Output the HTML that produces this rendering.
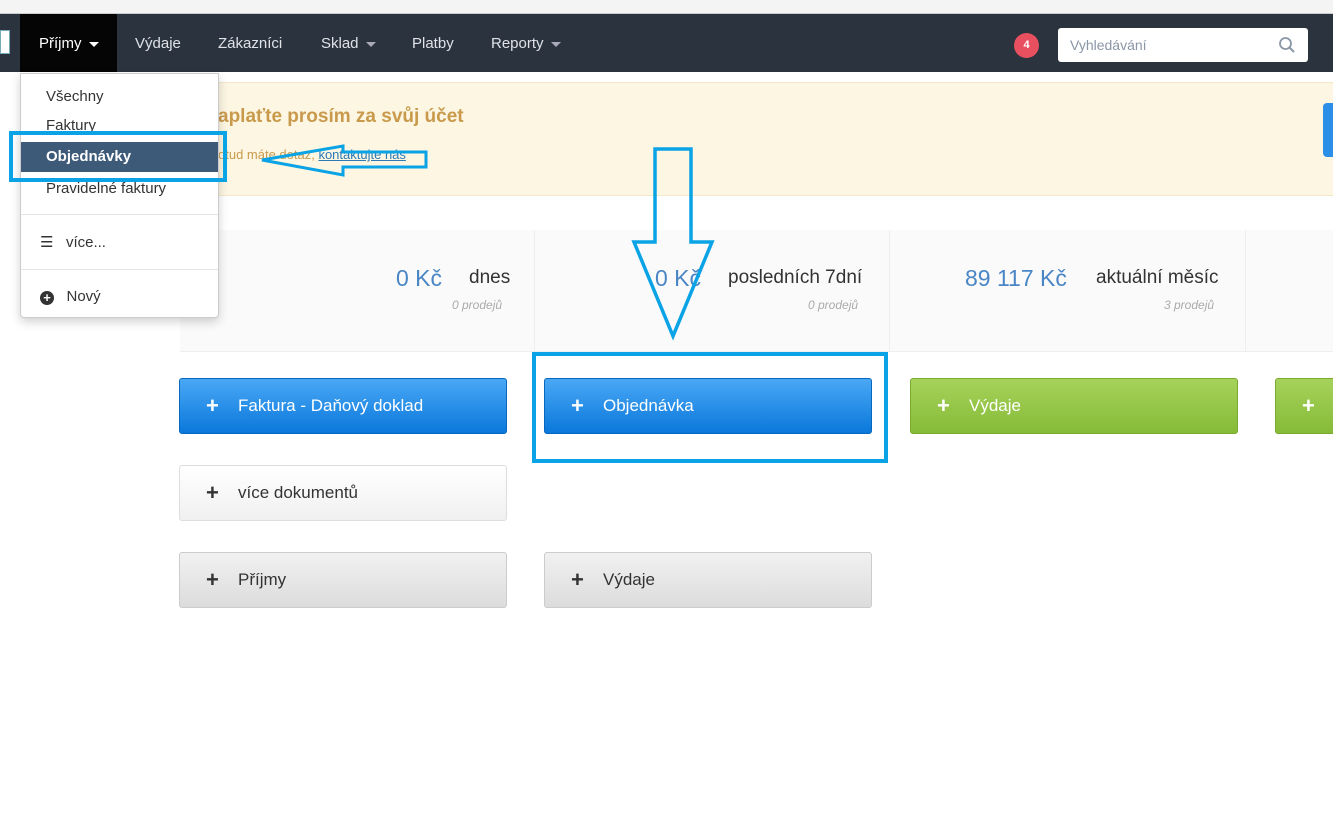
<!DOCTYPE html>
<html><head><meta charset="utf-8"><style>
*{box-sizing:border-box}
body{margin:0;width:1333px;height:832px;overflow:hidden;background:#fff;font-family:"Liberation Sans",sans-serif;position:relative}
.abs{position:absolute}
.top{left:0;top:0;width:1333px;height:14px;background:#f4f4f4;border-bottom:1px solid #ccc}
.nav{left:0;top:14px;width:1333px;height:58px;background:#2b333e}
.nav span{position:absolute;top:21px;font-size:15px;color:#dfe3e8}
.caret{display:inline-block;border-left:5px solid transparent;border-right:5px solid transparent;border-top:5px solid #aab;margin-left:7px;vertical-align:middle}
.btn{position:absolute;height:56px;width:328px;border-radius:3px;font-size:17px;line-height:54px;padding-left:58px}
.btn b{position:absolute;left:26px;top:0;font-size:22px}
.blue{background:linear-gradient(#4aa8f5,#0a78db);color:#fff;border:1px solid #0868c0}
.green{background:linear-gradient(#a6d25a,#86bb38);color:#fff;border:1px solid #7aab30}
.gray{background:linear-gradient(#f1f1f1,#dcdcdc);color:#333;border:1px solid #ccc}
.white{background:linear-gradient(#fff,#f0f0f0);color:#333;border:1px solid #ddd}
.stat{position:absolute;top:230px;height:122px;border-right:1px solid #eee}
.amt{position:absolute;top:265px;font-size:23px;color:#4a86c5}
.lbl{position:absolute;top:267px;font-size:19px;color:#333}
.sub{position:absolute;top:298px;font-size:12px;font-style:italic;color:#aaa}
.dd{left:20px;top:73px;width:199px;height:245px;background:#fff;border:1px solid #ccc;border-radius:0 0 4px 4px;box-shadow:0 4px 10px rgba(0,0,0,.18)}
.dd div{position:absolute;left:25px;font-size:15px;color:#333}
</style></head><body>
<div class="abs top"></div>
<div class="abs nav">
 <div class="abs" style="left:0;top:16px;width:10px;height:24px;background:#fff;border:1px solid #7ab"></div>
 <div class="abs" style="left:20px;top:0;width:97px;height:58px;background:#050505"></div>
 <span style="left:39px;color:#fff">Příjmy<i class="caret" style="border-top-color:#fff"></i></span>
 <span style="left:135px">Výdaje</span>
 <span style="left:218px">Zákazníci</span>
 <span style="left:321px">Sklad<i class="caret"></i></span>
 <span style="left:412px">Platby</span>
 <span style="left:491px">Reporty<i class="caret"></i></span>
 <div class="abs" style="left:1014px;top:19px;width:25px;height:25px;border-radius:50%;background:#e8505f;color:#fff;font-size:11px;font-weight:bold;text-align:center;line-height:25px">4</div>
 <div class="abs" style="left:1058px;top:14px;width:250px;height:34px;background:#fff;border-radius:3px;color:#8a95a5;font-size:14px;line-height:34px;padding-left:12px">Vyhledávání
  <svg class="abs" style="right:12px;top:8px" width="18" height="18" viewBox="0 0 18 18"><circle cx="7.5" cy="7.5" r="5.5" fill="none" stroke="#8a95a5" stroke-width="1.8"/><path d="M11.5 11.5L16 16" stroke="#8a95a5" stroke-width="2"/></svg></div>
</div>
<div class="abs" style="left:180px;top:82px;width:1153px;height:114px;background:#fcf6e2;border-top:1px solid #f5e8c8;border-bottom:1px solid #f5e8c8"></div>
<div class="abs" style="left:218px;top:106px;font-size:19px;font-weight:bold;color:#c99a4c">aplaťte prosím za svůj účet</div>
<div class="abs" style="left:218px;top:147px;font-size:13px;color:#c99a4c">otud máte dotaz, <u style="color:#2a7ab8">kontaktujte nás</u></div>
<div class="abs" style="left:1323px;top:103px;width:20px;height:54px;background:#2b8fe8;border-radius:4px"></div>
<div class="abs" style="left:180px;top:230px;width:1153px;height:122px;background:#fafafa;border-bottom:1px solid #eee"></div>
<div class="stat" style="left:180px;width:355px"></div>
<div class="stat" style="left:535px;width:355px"></div>
<div class="stat" style="left:890px;width:356px"></div>
<div class="amt" style="left:396px">0 Kč</div><div class="lbl" style="left:469px">dnes</div><div class="sub" style="left:452px">0 prodejů</div>
<div class="amt" style="left:655px">0 Kč</div><div class="lbl" style="left:728px">posledních 7dní</div><div class="sub" style="left:808px">0 prodejů</div>
<div class="amt" style="left:965px">89 117 Kč</div><div class="lbl" style="left:1096px">aktuální měsíc</div><div class="sub" style="left:1164px">3 prodejů</div>
<div class="btn blue" style="left:179px;top:378px"><b>+</b>Faktura - Daňový doklad</div>
<div class="btn blue" style="left:544px;top:378px"><b>+</b>Objednávka</div>
<div class="btn green" style="left:910px;top:378px"><b>+</b>Výdaje</div>
<div class="btn green" style="left:1275px;top:378px"><b>+</b></div>
<div class="btn white" style="left:179px;top:465px"><b style="color:#333">+</b>více dokumentů</div>
<div class="btn gray" style="left:179px;top:552px"><b style="color:#333">+</b>Příjmy</div>
<div class="btn gray" style="left:544px;top:552px"><b style="color:#333">+</b>Výdaje</div>
<div class="abs dd">
 <div style="top:14px">Všechny</div>
 <div style="top:43px">Faktury</div>
 <div style="left:0;top:68px;width:197px;height:30px;background:#3d5a78"></div>
 <div style="top:74px;color:#fff;font-weight:bold">Objednávky</div>
 <div style="top:106px">Pravidelné faktury</div>
 <div style="left:0;top:140px;width:197px;height:1px;background:#e5e5e5"></div>
 <div style="left:19px;top:159px">☰&nbsp;&nbsp; více...</div>
 <div style="left:0;top:195px;width:197px;height:1px;background:#e5e5e5"></div>
 <div style="left:19px;top:214px"><span style="display:inline-block;width:14px;height:14px;border-radius:50%;background:#333;color:#fff;font-size:13px;line-height:13px;text-align:center;font-weight:bold;vertical-align:-1px">+</span>&nbsp;&nbsp; Nový</div>
</div>
<svg class="abs" style="left:0;top:0" width="1333" height="832">
 <g fill="none" stroke="#0aa3e6" stroke-width="4">
  <rect x="11" y="133" width="214" height="47"/>
  <rect x="534" y="354" width="352" height="107"/>
  <path d="M655 149H691V242H712L673 336L634 242H655Z" stroke-width="3.5"/>
  <path d="M426 152V167H343V175L262 160L343 146V152Z" stroke-width="3"/>
 </g>
</svg>
</body></html>
